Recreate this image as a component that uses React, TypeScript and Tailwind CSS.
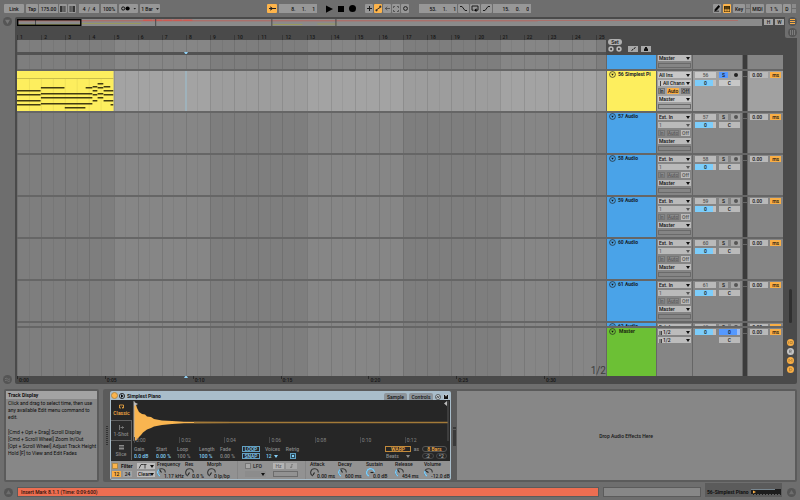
import React from "react";

const BAR = 100 / 24.4;
const bars = Array.from({ length: 25 }, (_, i) => i);

function Field({ label, value, className = "" }: { label: string; value: string; className?: string }) {
  return (
    <input
      aria-label={label}
      defaultValue={value}
      className={"block min-w-0 rounded-none p-0 text-center outline-none " + className}
    />
  );
}

function Pick({
  label,
  value,
  className = "",
  tone = "bg-[#bcbcbc]",
  arrow = "#111",
  text = "text-[#111]",
  icon,
}: {
  label: string;
  value: string;
  className?: string;
  tone?: string;
  arrow?: string;
  text?: string;
  icon?: string;
}) {
  return (
    <span className={"relative block h-[6px] shrink-0 " + className}>
      <select
        aria-label={label}
        defaultValue={value}
        className={"block h-[6px] w-full appearance-none rounded-none border-0 p-0 leading-[6px] outline-none " + (icon ? "pl-[5px] " : "pl-px ") + tone + " " + text}
      >
        <option>{value}</option>
      </select>
      {icon && (
        <svg className="pointer-events-none absolute top-px left-px h-[5px] w-[10px]" viewBox="0 0 10 5">
          <path d={icon} fill="none" stroke="#222" strokeWidth=".8" />
        </svg>
      )}
      <svg className="pointer-events-none absolute top-[2px] right-px h-[3px] w-[4px]" viewBox="0 0 4 3">
        <path d="M0 0h4L2 3z" fill={arrow} />
      </svg>
    </span>
  );
}

function ToolButton({ label, className = "", children }: { label: string; className?: string; children?: React.ReactNode }) {
  return (
    <button aria-label={label} className={"flex h-[9px] shrink-0 items-center justify-center rounded-[1px] " + (className.includes("bg-") ? "" : "bg-[#979797] ") + className}>
      {children}
    </button>
  );
}

const stroke = { fill: "none", stroke: "#1c1c1c", strokeWidth: 1 };

function Toolbar() {
  return (
    <header className="flex h-[17px] shrink-0 items-center px-[4px]">
      <div className="flex items-center">
        <ToolButton label="Link" className="w-[20px]">Link</ToolButton>
        <ToolButton label="Tap tempo" className="ml-[2px] w-[12px]">Tap</ToolButton>
        <Field label="Tempo" value="175.00" className="ml-px h-[9px] w-[19px] bg-[#979797]" />
        <ToolButton label="Nudge down" className="ml-px w-[8px]">
          <svg className="h-[6px] w-[6px]" viewBox="0 0 6 6"><path d="M0 0h2v6H0zM2.500 0h1v6h-1zM4 0h.6v6H4zM5.200 0h.4v6h-.4z" fill="#333" /></svg>
        </ToolButton>
        <ToolButton label="Nudge up" className="ml-px w-[8px]">
          <svg className="h-[6px] w-[6px]" viewBox="0 0 6 6"><path d="M.2 0h.4v6H.2zM1.200 0h.6v6h-.6zM2.500 0h1v6h-1zM4 0h2v6H4z" fill="#333" /></svg>
        </ToolButton>
        <Field label="Time signature" value="4  /  4" className="ml-[3px] h-[9px] w-[20px] bg-[#979797] whitespace-pre" />
        <Field label="Groove amount" value="100%" className="ml-[2px] h-[9px] w-[16px] bg-[#979797]" />
        <ToolButton label="Metronome" className="ml-[2px] w-[19px]">
          <svg className="h-[5px] w-[15px]" viewBox="0 0 15 5">
            <circle cx="2.200" cy="2.500" r="1.600" fill="none" stroke="#111" />
            <circle cx="6.600" cy="2.500" r="2.100" fill="#000" />
            <path d="M12.500 2h2.500l-1.200 1.600z" fill="#222" />
          </svg>
        </ToolButton>
        <ToolButton label="Quantization" className="ml-[2px] w-[20px] gap-[3px]">
          1 Bar
          <svg className="h-[2px] w-[3px]" viewBox="0 0 3 2"><path d="M0 0h3L1.500 2z" fill="#222" /></svg>
        </ToolButton>
      </div>
      <div className="ml-[107px] flex items-center">
        <ToolButton label="Follow" className="w-[10px] bg-[#fdb44b]">
          <svg className="h-[5px] w-[7px]" viewBox="0 0 7 5"><path d="M0 2.500h7M1.500 0.800l1.800 1.700-1.800 1.700" stroke="#222" fill="#222" /></svg>
        </ToolButton>
        <Field label="Position" value="8.     1.     1" className="ml-[2px] h-[9px] w-[38px] bg-[#979797] pr-[2px] text-right whitespace-pre" />
        <button aria-label="Play" className="ml-[9px]">
          <svg className="h-[8px] w-[7px]" viewBox="0 0 7 8"><path d="M0 .5L7 4 0 7.800z" /></svg>
        </button>
        <button aria-label="Stop" className="ml-[5px] h-[6px] w-[6px] bg-black" />
        <button aria-label="Record" className="ml-[5px] h-[7px] w-[7px] rounded-full bg-black" />
        <ToolButton label="Overdub" className="ml-[9px] w-[8px]">
          <svg className="h-[5px] w-[5px]" viewBox="0 0 5 5"><path d="M2.500 0v5M0 2.500h5" {...stroke} /></svg>
        </ToolButton>
        <ToolButton label="Automation arm" className="ml-px w-[8px] bg-[#fdb44b]">
          <svg className="h-[7px] w-[7px]" viewBox="0 0 7 7"><circle cx="1.500" cy="5.300" r="1.100" fill="#333" /><circle cx="5.300" cy="1.700" r="1.100" fill="#333" /><path d="M1.500 5.300L3 3.400h1.200l1.100-1.700" {...stroke} strokeWidth=".8" /></svg>
        </ToolButton>
        <ToolButton label="Re-enable automation" className="ml-px w-[8px]">
          <svg className="h-[5px] w-[5px]" viewBox="0 0 5 5"><path d="M0 2.500h5M2.200.7L.4 2.500l1.800 1.800" {...stroke} stroke="#444" strokeWidth=".8" /></svg>
        </ToolButton>
        <ToolButton label="Capture MIDI" className="ml-px w-[8px]">
          <svg className="h-[6px] w-[6px]" viewBox="0 0 6 6"><path d="M.5 2V.5H2M4 .5h1.500V2M5.500 4v1.500H4M2 5.500H.5V4" {...stroke} stroke="#444" strokeWidth=".8" /></svg>
        </ToolButton>
        <ToolButton label="Session record" className="ml-px w-[8px]">
          <svg className="h-[5px] w-[5px]" viewBox="0 0 5 5"><circle cx="2.500" cy="2.500" r="1.900" {...stroke} /></svg>
        </ToolButton>
        <Field label="Loop start" value="53.     1.     1" className="ml-[10px] h-[9px] w-[38px] bg-[#979797] pr-px text-right whitespace-pre" />
        <ToolButton label="Punch in" className="ml-px w-[11px]">
          <svg className="h-[5px] w-[7px]" viewBox="0 0 7 5"><path d="M0 .5h2l3 4h2" {...stroke} /></svg>
        </ToolButton>
        <ToolButton label="Loop" className="ml-px w-[10px]">
          <svg className="h-[7px] w-[8px]" viewBox="0 0 8 7"><path d="M2.500 5.200H1V1h6v4.200H5" {...stroke} /><path d="M5.500 3.300v3.700L3 5.200z" /></svg>
        </ToolButton>
        <ToolButton label="Punch out" className="ml-px w-[11px]">
          <svg className="h-[5px] w-[7px]" viewBox="0 0 7 5"><path d="M0 4.500h2l3-4h2" {...stroke} /></svg>
        </ToolButton>
        <Field label="Loop length" value="15.     0.     0" className="ml-px h-[9px] w-[38px] bg-[#979797] pr-[2px] text-right whitespace-pre" />
      </div>
      <div className="ml-auto flex items-center">
        <ToolButton label="Draw mode" className="w-[8px]">
          <svg className="h-[7px] w-[6px]" viewBox="0 0 6 7"><path d="M1 4.500L4.500.5l1.300 1L2.500 5.200 1 5.700zM0 6.200h5" stroke="#000" strokeWidth=".7" /></svg>
        </ToolButton>
        <ToolButton label="Computer MIDI keyboard" className="ml-[2px] w-[8px] bg-[#fdb44b]">
          <svg className="h-[6px] w-[6px]" viewBox="0 0 6 6"><path d="M0 0h6v6H0z" fill="#3a2a08" /><path d="M.7 3.500h1.200v1.800H.7zM2.400 3.500h1.200v1.800H2.400zM4.100 3.500h1.200v1.800H4.100zM1.900 .5v3M4 .5v3" fill="#fdb44b" stroke="#fdb44b" strokeWidth=".3" /></svg>
        </ToolButton>
        <ToolButton label="Key map" className="ml-[2px] w-[12px]">Key</ToolButton>
        <span className="ml-px flex w-[4px] flex-col gap-px"><i className="h-[4px] bg-[#8b8b8b]" /><i className="h-[4px] bg-[#8b8b8b]" /></span>
        <ToolButton label="MIDI map" className="ml-px w-[13px]">MIDI</ToolButton>
        <ToolButton label="CPU load" className="ml-[2px] w-[16px]">1 %</ToolButton>
        <ToolButton label="Disk overload" className="ml-px w-[8px]">D</ToolButton>
        <span className="ml-px flex w-[4px] flex-col gap-px"><i className="h-[4px] bg-[#8b8b8b]" /><i className="h-[4px] bg-[#8b8b8b]" /></span>
      </div>
    </header>
  );
}

function Overview() {
  return (
    <div className="flex h-[9px] gap-[2px] pt-[2px] pr-[13px] pl-[2px]">
      <svg className="h-[7px] min-w-0 flex-1" viewBox="0 0 744 7" preserveAspectRatio="none">
        <rect width="744" height="7" fill="#8b8b8b" />
        <path d="M0 1.500h720" stroke="#a9706b" strokeWidth="1" />
        <path d="M126 1.500h50" stroke="#cc5a52" strokeWidth="2" strokeDasharray="9 1" />
        <path d="M0 2.500h520" stroke="#98807e" strokeWidth="1" />
        <path d="M0 5.500h64M64 4.500h60M255 5.500h30M300 5h20" stroke="#98995f" strokeWidth="1" />
        <path d="M18.500 0v7M138.500 0v7M254.500 0v7M318.500 0v7" stroke="#4a4a4a" />
        <rect x=".7" y=".7" width="63" height="5.600" fill="none" stroke="#000" strokeWidth="1.400" />
      </svg>
      <button className="h-[6px] w-[9px] bg-[#a5a5a5] text-center leading-[6px] text-[#222]">H</button>
      <button className="h-[6px] w-[9px] bg-[#a5a5a5] text-center leading-[6px] text-[#222]">W</button>
    </div>
  );
}

function Lane({ className = "", selected = false, children }: { className?: string; selected?: boolean; children?: React.ReactNode }) {
  return (
    <div className={"relative flex min-w-0 overflow-hidden " + className}>
      {bars.map((i) => (
        <div
          key={i}
          style={{ width: BAR + "%" }}
          className={
            "flex shrink-0 border-l border-black/10 " +
            (selected ? (i % 8 < 4 ? "bg-[#9d9d9d]" : "bg-[#a3a3a3]") : i % 8 < 4 ? "bg-[#7e7e7e]" : "bg-[#868686]")
          }
        >
          <div className="w-1/2 border-r border-black/5" />
        </div>
      ))}
      {children}
    </div>
  );
}

const notes = [
  [0, 24, 19], [0, 24, 23], [0, 24, 29], [0, 24, 33],
  [24, 48, 16], [24, 76, 22], [24, 76, 26], [24, 76, 32],
  [48, 69, 36], [69, 76, 16],
  [76, 81, 15], [76, 81, 19], [76, 81, 23], [76, 81, 29],
  [81, 87, 12], [81, 87, 16], [81, 87, 22], [81, 87, 26],
  [87, 94, 15], [87, 97, 19], [87, 97, 23], [87, 97, 29], [94, 97, 33],
];

function Clip() {
  return (
    <>
      <svg
        className="absolute inset-y-0 left-0 h-full"
        style={{ width: BAR * 4 + "%" }}
        viewBox="0 0 97 40"
        preserveAspectRatio="none"
      >
        <rect width="97" height="40" fill="#fdee5e" />
        <path d="M0 7.500h97" stroke="#c9bd4b" />
        <path d="M12.500 8v32M24.500 8v32M36.500 8v32M48.500 8v32M60.500 8v32M72.500 8v32M84.500 8v32" stroke="#f0e158" />
        {notes.map(([a, b, y], i) => (
          <rect key={i} x={a} y={y} width={b - a - 0.3} height="1.500" fill="#423b12" />
        ))}
      </svg>
      <div className="absolute inset-y-0 w-[2px] bg-[#9fb2bb]" style={{ left: BAR * 7 - 0.1 + "%" }} />
    </>
  );
}

type Track = { n: number; name: string; height: string; kind?: "midi"; tail?: boolean; head?: boolean };

const tracks: Track[] = [
  { n: 55, name: "55 Audio", height: "h-[14px]", tail: true },
  { n: 56, name: "56 Simplest Pi", height: "h-[40px]", kind: "midi" },
  { n: 57, name: "57 Audio", height: "h-[40px]" },
  { n: 58, name: "58 Audio", height: "h-[40px]" },
  { n: 59, name: "59 Audio", height: "h-[40px]" },
  { n: 60, name: "60 Audio", height: "h-[40px]" },
  { n: 61, name: "61 Audio", height: "h-[40px]" },
  { n: 62, name: "62 Audio", height: "h-[3px]", head: true },
];

const COLS = "grid grid-cols-[minmax(0,1fr)_49px_35px_49px_4px_35px] grid-rows-[100%] gap-x-px overflow-hidden";

function FoldButton({ name }: { name: string }) {
  return (
    <button aria-label={"Fold " + name} className="h-[7px] w-[7px] shrink-0">
      <svg className="h-[7px] w-[7px]" viewBox="0 0 7 7">
        <circle cx="3.500" cy="3.500" r="2.900" fill="none" stroke="#222" strokeWidth=".7" />
        <path d="M2.200 2.800h2.600L3.500 4.700z" fill="#111" />
      </svg>
    </button>
  );
}

function Delay({ name, sel }: { name: string; sel: boolean }) {
  return (
    <div className={"flex items-start gap-[2px] overflow-hidden px-[2px] pt-px " + (sel ? "bg-[#a1a1a1]" : "bg-[#858585]")}>
      <Field label={name + " delay"} value="0.00" className="h-[6px] w-[19px] bg-[#b9b9b9] pr-[4px]" />
      <button className="h-[6px] w-[11px] bg-[#f9ae45] text-center leading-[6px]">ms</button>
    </div>
  );
}

function TrackRow({ t }: { t: Track }) {
  const sel = t.kind === "midi";
  const bg = sel ? "bg-[#a1a1a1]" : "bg-[#858585]";
  const ctl = sel ? "bg-[#c8c8c8]" : "bg-[#bababa]";
  const off = sel ? "bg-[#9b9b9b] text-[#222]" : "bg-[#8b8b8b] text-[#5a5a5a]";
  return (
    <div className={COLS + " shrink-0 " + t.height}>
      <Lane selected={sel}>{sel && <Clip />}</Lane>
      <div className={"flex items-start gap-[2px] overflow-hidden pl-[2px] font-bold text-[#16222c] " + (sel ? "bg-[#fdee5e]" : "bg-[#4aa3e8]")}>
        {!t.tail && <FoldButton name={t.name} />}
        {!t.tail && <span className="whitespace-nowrap">{t.name}</span>}
      </div>
      <div className={"flex flex-col gap-[2px] overflow-hidden px-px " + bg + (t.tail ? " justify-end pb-px" : " pt-px")}>
        {!t.tail && <Pick label={t.name + " input type"} value={sel ? "All Ins" : "Ext. In"} tone={ctl} />}
        {!t.tail && !t.head && (
          <>
            <Pick
              label={t.name + " input channel"}
              value={sel ? "All Chann" : "1"}
              tone={ctl}
              text={sel ? "text-[#111]" : "text-[#666]"}
              arrow={sel ? "#111" : "#555"}
              icon={sel ? "M1.500 0v5" : undefined}
            />
            <div className="flex h-[6px] shrink-0 gap-[2px] leading-[6px]">
              <button className={"w-[7px] outline outline-[#757575] -outline-offset-1 " + off}>In</button>
              <button className={"w-[12px] " + (sel ? "bg-[#f9ae45]" : "outline outline-[#757575] -outline-offset-1 " + off)}>Auto</button>
              <button className={"w-[9px] " + (sel ? "outline outline-[#757575] -outline-offset-1 " + off : "bg-[#bababa] text-[#555]")}>Off</button>
            </div>
          </>
        )}
        {!t.head && (
          <>
            <Pick label={t.name + " output"} value="Master" tone={ctl} />
            <div className="h-[5px] shrink-0 border border-[#6a6a6a]" />
          </>
        )}
      </div>
      <div className={"grid grid-cols-[21px_9px_9px] content-start gap-x-[3px] gap-y-[2px] overflow-hidden pt-px pl-[2px] leading-[6px] " + bg}>
        {!t.tail && (
          <>
            <button className={"h-[6px] text-[#555] " + ctl}>{t.n}</button>
            <button className={"h-[6px] " + (sel ? "bg-[#5599ff]" : "bg-[#a6a6a6]")}>S</button>
            <button aria-label={"Arm " + t.name} className="flex h-[6px] items-center justify-center bg-[#a6a6a6]">
              <i className={"h-[4px] w-[4px] rounded-full " + (sel ? "bg-[#222]" : "bg-[#555]")} />
            </button>
          </>
        )}
        {!t.tail && !t.head && (
          <>
            <Field label={t.name + " volume"} value="0" className="h-[6px] w-[21px] bg-[linear-gradient(90deg,#7ccdfb_85%,#c0c0c0_85%)]" />
            <Field label={t.name + " pan"} value="C" className={"col-span-2 h-[6px] w-[21px] " + ctl} />
          </>
        )}
      </div>
      <div className="bg-[#3b3b3b]">{!t.tail && <i className="mt-[5px] block h-px bg-[#666]" />}</div>
      {t.tail ? <div className={bg} /> : <Delay name={t.name} sel={sel} />}
    </div>
  );
}

function MasterRow() {
  return (
    <div className={COLS + " h-[48px] shrink-0"}>
      <Lane>
        <span className="absolute right-0 bottom-0 text-[10px] leading-[10px] font-normal text-[#3c3c3c]">1/2</span>
      </Lane>
      <div className="flex items-start gap-[3px] bg-[#6cc035] pl-[2px] font-bold text-[#1b2a10]">
        <FoldButton name="Master" />
        <span>Master</span>
      </div>
      <div className="flex flex-col gap-[2px] bg-[#858585] px-px pt-px">
        <Pick label="Cue out" value="1/2" icon="M1 1v4M2.500 1v4" />
        <Pick label="Master out" value="1/2" icon="M1 1v4M2.500 1v4" />
      </div>
      <div className="grid grid-cols-[21px_21px] content-start gap-x-[3px] gap-y-[2px] bg-[#858585] pt-px pl-[2px]">
        <Field label="Cue volume" value="0" className="h-[6px] w-[21px] bg-[linear-gradient(90deg,#7ccdfb_85%,#c0c0c0_85%)]" />
        <Field label="Master volume" value="0" className="h-[6px] w-[21px] bg-[linear-gradient(90deg,#5599ff_85%,#a0bdf0_85%)]" />
        <Field label="Master pan" value="C" className="col-start-2 h-[6px] w-[21px] bg-[#bababa]" />
      </div>
      <div className="bg-[#3b3b3b]"><i className="mt-[5px] block h-px bg-[#666]" /></div>
      <Delay name="Master" sel={false} />
    </div>
  );
}

function Marker({ up = false }: { up?: boolean }) {
  return (
    <svg className="absolute top-0 h-[2px] w-[4px] -translate-x-1/2" style={{ left: BAR * 7 + "%" }} viewBox="0 0 4 2">
      <path d={up ? "M0 2h4L2.700 0H1.300z" : "M0 0h4L2.700 2H1.300z"} fill="#8fd0f5" />
    </svg>
  );
}

function RulerHead() {
  return (
    <div className="flex h-[29px] shrink-0 gap-x-px">
      <div className="flex min-w-0 flex-1 flex-col">
        <div className="flex h-[14px] items-end overflow-hidden text-[#151515]">
          {bars.map((i) => (
            <div key={i} style={{ width: BAR + "%" }} className="h-[5px] shrink-0 border-l border-[#383838] pl-[2px] leading-[5px]">
              {i + 1}
            </div>
          ))}
        </div>
        <Lane className="h-[12px]" />
        <div className="relative h-[3px] bg-[#525252]"><Marker /></div>
      </div>
      <div className="flex w-[176px] flex-col items-start gap-px pt-[13px] pl-px">
        <button className="h-[6px] w-[14px] rounded-full bg-[#b0b0b0] text-center leading-[6px]">Set</button>
        <div className="flex items-center">
          <button aria-label="Previous locator" className="h-[6px] w-[6px]">
            <svg className="h-[6px] w-[6px]" viewBox="0 0 6 6"><circle cx="3" cy="3" r="2.700" fill="#b8b8b8" /><path d="M3.600 1.800v2.400L1.800 3z" /></svg>
          </button>
          <button aria-label="Next locator" className="ml-[2px] h-[6px] w-[6px]">
            <svg className="h-[6px] w-[6px]" viewBox="0 0 6 6"><circle cx="3" cy="3" r="2.700" fill="#b8b8b8" /><path d="M2.400 1.800v2.400L4.200 3z" /></svg>
          </button>
          <button aria-label="Automation mode" className="ml-[6px] flex h-[6px] w-[10px] items-center justify-center bg-[#a8a8a8]">
            <svg className="h-[4px] w-[5px]" viewBox="0 0 5 4"><path d="M.5 3.500L2 2.500 3 1.500 4.500.5" stroke="#111" fill="none" /></svg>
          </button>
          <button aria-label="Lock envelopes" className="ml-[3px] flex h-[6px] w-[10px] items-center justify-center bg-[#a8a8a8]">
            <svg className="h-[4px] w-[4px]" viewBox="0 0 4 4"><path d="M0 1.500h4V4H0zM1 0h2v1.500H1z" fill="#111" /></svg>
          </button>
        </div>
      </div>
    </div>
  );
}

const times = ["0:00", "0:05", "0:10", "0:15", "0:20", "0:25", "0:30"];
const FIVE = 8800 / 590;

function RoundIcon({ label, children }: { label: string; children: React.ReactNode }) {
  return (
    <button aria-label={label} className="h-[9px] w-[9px] shrink-0">
      <svg className="h-[9px] w-[9px]" viewBox="0 0 9 9">
        <circle cx="4.500" cy="4.500" r="4.500" fill="#555" />
        {children}
      </svg>
    </button>
  );
}

function Arrangement() {
  return (
    <section className="flex shrink-0">
      <div className="flex w-[15px] flex-col items-center justify-between">
        <RoundIcon label="Show browser"><path d="M2 2.700h5L4.500 7z" fill="#777" /></RoundIcon>
        <RoundIcon label="Groove pool"><path d="M2 3.800q1.200-1.300 2.500 0t2.500 0M2 5.800q1.200-1.300 2.500 0t2.500 0" fill="none" stroke="#777" strokeWidth=".8" /></RoundIcon>
      </div>
      <div className="relative mr-[3px] min-w-0 flex-1 rounded-[2px] bg-[#4a4a4a]">
        <Overview />
        <div className="flex pl-[2px]">
          <div className="min-w-0 flex-1">
            <RulerHead />
            <div className="flex flex-col gap-[2px] bg-[#666]">
              {tracks.map((t) => <TrackRow key={t.n} t={t} />)}
              <MasterRow />
            </div>
            <div className="flex h-[8px]">
              <div className="relative flex min-w-0 flex-1 overflow-hidden text-[#151515]">
                {times.map((s) => (
                  <div key={s} style={{ width: FIVE + "%" }} className="relative h-[3px] shrink-0 border-l border-[#2a2a2a] pl-px leading-[8px]">
                    {s}
                  </div>
                ))}
                <Marker up />
              </div>
              <div className="w-[177px]" />
            </div>
          </div>
          <div className="flex w-[14px] flex-col items-center justify-end pb-[11px]">
            <button aria-label="Scroll tracks" className="mb-[16px] h-[34px] w-[3px] rounded-full bg-[#303030]" />
            <div className="flex flex-col gap-[2px]">
              {["I/O sections", "Returns", "Mixer section", "Track delay"].map((s, i) => (
                <button key={s} aria-label={s} className="h-[7px] w-[7px]">
                  <svg className="h-[7px] w-[7px]" viewBox="0 0 7 7">
                    <circle cx="3.500" cy="3.500" r="3.500" fill={i === 1 ? "#c4c4c4" : "#f9ae45"} />
                    {i === 0 && <path d="M1.500 2.300v2.400M3 2.500h2.300v2H3z" stroke="#a67c37" fill="none" strokeWidth=".7" />}
                    {i === 1 && <path d="M2.500 5V2h1.800v1.500H2.500L4.700 5" stroke="#777" fill="none" strokeWidth=".7" />}
                    {i === 2 && <path d="M2 5V2.200l1.500 1.500L5 2.200V5" stroke="#a67c37" fill="none" strokeWidth=".7" />}
                    {i === 3 && <path d="M2.500 5V2q2.500 0 2.500 1.500T2.500 5" stroke="#a67c37" fill="none" strokeWidth=".7" />}
                  </svg>
                </button>
              ))}
            </div>
          </div>
        </div>
        <div className="absolute top-0 -right-[3px] flex h-[21px] w-[15px] flex-col items-center gap-[2px] rounded-bl-[2px] bg-[#6e6e6e]">
          <RoundIcon label="Arrangement view"><path d="M2 2.500h5M2 4.500h5M2 6.500h5" stroke="#f9ae45" strokeWidth="1" /></RoundIcon>
          <RoundIcon label="Session view"><path d="M2.500 2v5M4.500 2v5M6.500 2v5" stroke="#888" strokeWidth=".8" /></RoundIcon>
        </div>
      </div>
    </section>
  );
}

function Knob({ label, value, arc, angle, className = "" }: { label: string; value: string; arc?: string; angle: number; className?: string }) {
  return (
    <label className={"flex flex-col text-[#161616] " + className}>
      <span className="h-[6px]">{label}</span>
      <span className="flex h-[12px] items-end">
        <svg className="mb-[2px] h-[9px] w-[9px] shrink-0" viewBox="0 0 9 9">
          <path d="M3 8A3.800 3.800 0 1 1 8.300 4.500" fill="none" stroke="#3a3a3a" strokeWidth="1.100" />
          {arc && <path d={arc} fill="none" stroke="#7ccdfb" strokeWidth="1.500" />}
          <path d="M4.500 4.500V1.500" stroke="#222" strokeWidth="1.100" transform={"rotate(" + angle + " 4.500 4.500)"} />
        </svg>
        <input defaultValue={value} className="-ml-[2px] block h-[6px] w-[21px] bg-transparent p-0 outline-none" />
      </span>
    </label>
  );
}

const LOW_ARC = "M3 8A3.800 3.800 0 0 1 2.200 1.500";

function Param({ label, value, className = "", dim = false }: { label: string; value: string; className?: string; dim?: boolean }) {
  return (
    <label className={"flex flex-col gap-px text-[#8a8a8a] " + className}>
      {label}
      <input defaultValue={value} className={"block h-[6px] w-full bg-transparent p-0 outline-none " + (dim ? "text-[#8a8a8a]" : "text-[#85d0f7]")} />
    </label>
  );
}

function Waveform() {
  return (
    <svg className="h-[49px] w-full" viewBox="0 0 318 49" preserveAspectRatio="none">
      <g transform="translate(2 1)">
        <path
          d="M0 21.500V1.500L1.500 2 3 7 5 11 8 13 11 13.500 13 15.500 17 16 20 18 28 19.500 38 20 50 20.700 100 21 170 21.200V21.800L100 22 50 22.300 38 23 28 24 20 25.500 17 27 13 28.500 9 31.500 7 34 5 36 3 39 0 40z"
          fill="#f9b550"
        />
        <path d="M60 21.500H314" stroke="#a37a38" strokeWidth="1.500" />
        <path d="M0 0v40" stroke="#aaa" />
        <path d="M0 1l4 2-4 2zM313 0v5l-3-2.500z" fill="#bbb" />
        <path d="M314 0v40" stroke="#555" />
      </g>
    </svg>
  );
}

const tabBase = "flex h-[20px] flex-col items-center justify-center gap-px ";

function Simpler() {
  return (
    <article className="flex w-[341px] shrink-0 flex-col rounded-[2px] bg-[#a9bdca]">
      <div className="flex h-[9px] items-center pl-px">
        <button aria-label="Device on" className="h-[7px] w-[7px] rounded-full border border-[#b08a48] bg-[#fdb44b]" />
        <button aria-label="Unfold" className="ml-px h-[6px] w-[6px]">
          <svg className="h-[6px] w-[6px]" viewBox="0 0 6 6"><circle cx="3" cy="3" r="2.600" fill="none" stroke="#111" strokeWidth=".8" /><path d="M2 1.300v3.400L4.700 3z" /></svg>
        </button>
        <h2 className="ml-[2px] font-bold">Simplest Piano</h2>
        <div className="ml-auto flex h-[7px] items-center gap-[2px] self-end pr-[2px]">
          <button className="h-[7px] w-[23px] rounded-t-[2px] bg-[#8d949a]">Sample</button>
          <button className="h-[7px] w-[24px] rounded-t-[2px] bg-[#8d949a]">Controls</button>
          <button aria-label="Hot-swap" className="h-[6px] w-[6px]">
            <svg className="h-[6px] w-[6px]" viewBox="0 0 6 6"><circle cx="3" cy="3" r="2.500" fill="#c8d2d8" stroke="#333" strokeWidth=".7" /><path d="M1.500 3.500l1.500-1.300v1.600L4.500 2.500" stroke="#222" strokeWidth=".7" fill="none" /></svg>
          </button>
          <button aria-label="Save preset" className="h-[6px] w-[6px]">
            <svg className="h-[6px] w-[6px]" viewBox="0 0 6 6"><circle cx="3" cy="3" r="2.700" fill="#c8d2d8" /><path d="M1 1h4v4H1z" fill="#111" /><path d="M2.200 1h1.600v1.300H2.200z" fill="#ccc" /></svg>
          </button>
        </div>
      </div>
      <div className="mx-px flex h-[61px] bg-[#262626]">
        <div className="flex w-[21px] flex-col text-[#8a8a8a]">
          <button className={tabBase + "text-[#f9ae45]"}>
            <svg className="h-[5px] w-[5px]" viewBox="0 0 5 5"><path d="M2 4H.5V1h4v3H3M3 2.800L4.200 4" fill="none" stroke="#f9ae45" strokeWidth=".8" /></svg>
            Classic
          </button>
          <button className={tabBase + "border-t border-r border-[#606060] bg-[#2b2b2b]"}>
            <svg className="h-[5px] w-[5px]" viewBox="0 0 5 5"><path d="M.5 0v5M1.500 2.500h3M3.300 1.300l1.200 1.200-1.200 1.200" fill="none" stroke="#8a8a8a" strokeWidth=".8" /></svg>
            1-Shot
          </button>
          <button className={tabBase + "border-t border-r border-[#606060] bg-[#2b2b2b]"}>
            <svg className="h-[5px] w-[5px]" viewBox="0 0 5 5"><path d="M0 .5h5M0 2h5M0 3.500h5M0 5h5" stroke="#8a8a8a" /></svg>
            Slice
          </button>
        </div>
        <div className="flex min-w-0 flex-1 flex-col">
          <div className="relative h-[46px]">
            <Waveform />
            <div className="absolute inset-x-0 top-[37px] flex pl-[2px] font-normal text-[#858585]">
              {["0:00", "0:02", "0:04", "0:06", "0:08", "0:10", "0:12"].map((s) => (
                <span key={s} className="w-1/7 border-l border-[#484848] pl-px">{s}</span>
              ))}
            </div>
          </div>
          <div className="flex pl-[2px]">
            <Param label="Gain" value="0.0 dB" className="w-[22px]" />
            <Param label="Start" value="0.00 %" className="w-[21px]" />
            <Param label="Loop" value="100 %" className="w-[22px]" dim />
            <Param label="Length" value="100 %" className="w-[21px]" />
            <Param label="Fade" value="0.00 %" className="w-[22px]" dim />
            <div className="flex flex-col gap-px pr-[5px] text-[#85d0f7]">
              <button className="h-[6px] w-[18px] border border-[#62a0c2] leading-[4px]">LOOP</button>
              <button className="h-[6px] w-[18px] border border-[#62a0c2] leading-[4px]">SNAP</button>
            </div>
            <div className="flex w-[19px] flex-col gap-px text-[#8a8a8a]">
              Voices
              <Pick label="Voices" value="12" className="w-[14px]" tone="bg-transparent" text="text-[#85d0f7]" arrow="#85d0f7" />
            </div>
            <label className="flex w-[17px] flex-col items-center gap-px text-[#8a8a8a]">
              Retrig
              <span className="relative h-[6px] w-[6px]">
                <input type="checkbox" defaultChecked className="absolute inset-0 h-[6px] w-[6px] appearance-none border border-[#5f9fc0] bg-[#2a4656]" />
                <i className="pointer-events-none absolute top-[2px] left-[2px] h-[2px] w-[2px] bg-[#85d0f7]" />
              </span>
            </label>
            <div className="mr-[3px] ml-auto grid grid-cols-[26px_7px_25px] gap-x-[2px] gap-y-px">
              <button className="h-[6px] border border-[#c28a3b] text-center leading-[4px] text-[#f9ae45]">WARP</button>
              <span className="text-center text-[#8a8a8a]">as</span>
              <button className="h-[6px] rounded-full border border-[#555] leading-[4px] text-[#f9ae45]">8 Bars</button>
              <Pick label="Warp mode" value="Beats" tone="bg-transparent" text="text-[#8a8a8a]" arrow="#8a8a8a" />
              <span />
              <div className="flex gap-[2px] text-[#aaa]">
                <button className="h-[6px] flex-1 rounded-full border border-[#484848] leading-[4px]">:2</button>
                <button className="h-[6px] flex-1 rounded-full border border-[#484848] leading-[4px]">*2</button>
              </div>
            </div>
          </div>
        </div>
      </div>
      <div className="mx-px mb-px flex h-[18px] bg-[#929292]">
        <div className="flex w-[46px] flex-col justify-center gap-[2px] pl-px">
          <div className="flex h-[6px] items-center">
            <label className="flex w-[25px] items-center gap-[3px] font-bold">
              <input type="checkbox" defaultChecked className="h-[6px] w-[6px] appearance-none border border-[#b08a48] bg-[#fdb44b]" />
              Filter
            </label>
            <Pick label="Filter shape" value="" className="w-[18px]" icon="M1 4.500L3 .5h2.500M7 .5v4M5.500 .5h3" />
          </div>
          <div className="flex h-[6px] items-center leading-[6px]">
            <button className="w-[9px] bg-[#f9ae45]">12</button>
            <button className="ml-[2px] w-[9px] bg-[#a4a4a4]">24</button>
            <Pick label="Filter circuit" value="Clean" className="ml-[5px] w-[18px]" />
          </div>
        </div>
        <Knob label="Frequency" value="1.17 kHz" arc={LOW_ARC} angle={-35} className="w-[28px]" />
        <Knob label="Res" value="0.0 %" angle={-150} className="w-[22px]" />
        <Knob label="Morph" value="0 lp/bp" angle={-150} className="w-[30px]" />
        <div className="flex w-[69px] flex-col justify-center gap-[2px] border-x border-[#858585] pl-[7px]">
          <div className="flex h-[6px] items-center">
            <label className="flex w-[28px] items-center gap-[2px] font-bold text-[#333]">
              <input type="checkbox" className="h-[6px] w-[6px] appearance-none border border-[#777] bg-[#a8a8a8]" />
              LFO
            </label>
            <button className="h-[6px] w-[11px] bg-[#b4b4b4] leading-[6px] text-[#666]">Hz</button>
            <button aria-label="Sync LFO" className="ml-[2px] flex h-[6px] w-[11px] items-center justify-center bg-[#a8a8a8]">
              <svg className="h-[4px] w-[3px]" viewBox="0 0 3 4"><circle cx="1" cy="3.200" r=".8" fill="#666" /><path d="M1.800 3.200V0l1 1" stroke="#666" strokeWidth=".6" fill="none" /></svg>
            </button>
          </div>
          <div className="flex h-[6px] gap-[7px]">
            <Pick label="LFO shape" value="" className="w-[21px]" tone="bg-[#8c8c8c] outline outline-[#6c6c6c] -outline-offset-1" />
            <Field label="LFO rate" value="" className="h-[6px] w-[25px] border border-[#6c6c6c]" />
          </div>
        </div>
        <Knob label="Attack" value="0.00 ms" angle={-150} className="w-[29px] pl-[4px]" />
        <Knob label="Decay" value="600 ms" arc={LOW_ARC} angle={-30} className="w-[28px] pl-[3px]" />
        <Knob label="Sustain" value="0.0 dB" arc="M3 8A3.800 3.800 0 1 1 8.300 4.500" angle={90} className="w-[29px] pl-[3px]" />
        <Knob label="Release" value="454 ms" arc={LOW_ARC} angle={-35} className="w-[29px] pl-[3px]" />
        <Knob label="Volume" value="-12.0 dB" arc="M3 8A3.800 3.800 0 0 1 1.200 2.800" angle={-60} className="w-[28px] pl-[3px]" />
      </div>
    </article>
  );
}

function DeviceView() {
  return (
    <section className="flex flex-1 gap-[4px] px-[4px] pr-[3px] pt-[5px] pb-px">
      <aside className="flex w-[95px] shrink-0 flex-col rounded-[2px] border-2 border-[#5b5b5b] bg-[#878787]">
        <h2 className="h-[8px] bg-[#a3a3a3] pl-[2px] leading-[8px] font-bold">Track Display</h2>
        <div className="pt-px pl-[2px] leading-[7px] font-normal whitespace-nowrap text-[#0c0c0c]">
          <p>Click and drag to select time, then use<br />any available Edit menu command to<br />edit.</p>
          <p className="pt-[8px]">[Cmd + Opt + Drag] Scroll Display<br />[Cmd + Scroll Wheel] Zoom In/Out<br />[Opt + Scroll Wheel] Adjust Track Height<br />Hold [F] to View and Edit Fades</p>
        </div>
      </aside>
      <div className="flex min-w-0 flex-1 rounded-[2px] bg-[#5b5b5b] p-[2px] pl-0">
        <div className="flex w-[7px] items-center justify-center">
          <div className="h-[19px] w-[2px] bg-[repeating-linear-gradient(#333_0_1px,#5b5b5b_1px_2px)]" />
        </div>
        <Simpler />
        <div className="flex w-[6px] flex-col items-center justify-center pt-px">
          <i className="mb-px h-[2px] w-[3px] bg-[#3a3a3a]" />
          <i className="h-[16px] w-[3px] bg-[#3a3a3a]" />
        </div>
        <div className="flex min-w-0 flex-1 items-center justify-center bg-[#878787] text-[#161616]">Drop Audio Effects Here</div>
      </div>
    </section>
  );
}

function StatusBar() {
  return (
    <footer className="flex h-[18px] shrink-0 items-center pr-[4px]">
      <div className="flex w-[17px] pl-[4px]">
        <RoundIcon label="Hide info"><path d="M2 6.300h5L4.500 2z" fill="#6e6e6e" /></RoundIcon>
      </div>
      <p className="h-[10px] min-w-0 flex-1 border border-[#5b5b5b] bg-[#ed6e52] pl-[3px] leading-[8px] text-[#2c100a]">Insert Mark 8.1.1 (Time: 0:09:600)</p>
      <div className="ml-[4px] h-[10px] w-[98px] border border-[#5b5b5b] bg-[#878787]" />
      <button className="ml-[4px] flex h-[14px] w-[77px] items-center gap-px self-start bg-[#5b5b5b] pt-[4px] pl-[2px] font-bold text-[#111]">
        <span className="w-[43px] text-left whitespace-nowrap">56-Simplest Piano</span>
        <svg className="h-[6px] w-[30px]" viewBox="0 0 30 6">
          <rect width="30" height="6" fill="#1d1d1d" />
          <path d="M0 .4h24" stroke="#9fb4c0" strokeWidth=".8" />
          <path d="M2 1.500l3 1.500-3 1.500z" fill="#f9ae45" />
          <path d="M0 5.600h30" stroke="#777" strokeWidth=".8" strokeDasharray="2 1" />
        </svg>
      </button>
      <div className="ml-[5px] flex">
        <RoundIcon label="Hide device view"><path d="M2 6.300h5L4.500 2z" fill="#6e6e6e" /></RoundIcon>
      </div>
    </footer>
  );
}

export default function App() {
  return (
    <main className="flex min-h-screen flex-col bg-[#6e6e6e] font-[Roboto,'Liberation_Sans',sans-serif] text-[5px] leading-[6px] font-medium text-[#111]">
      <Toolbar />
      <Arrangement />
      <DeviceView />
      <StatusBar />
    </main>
  );
}
